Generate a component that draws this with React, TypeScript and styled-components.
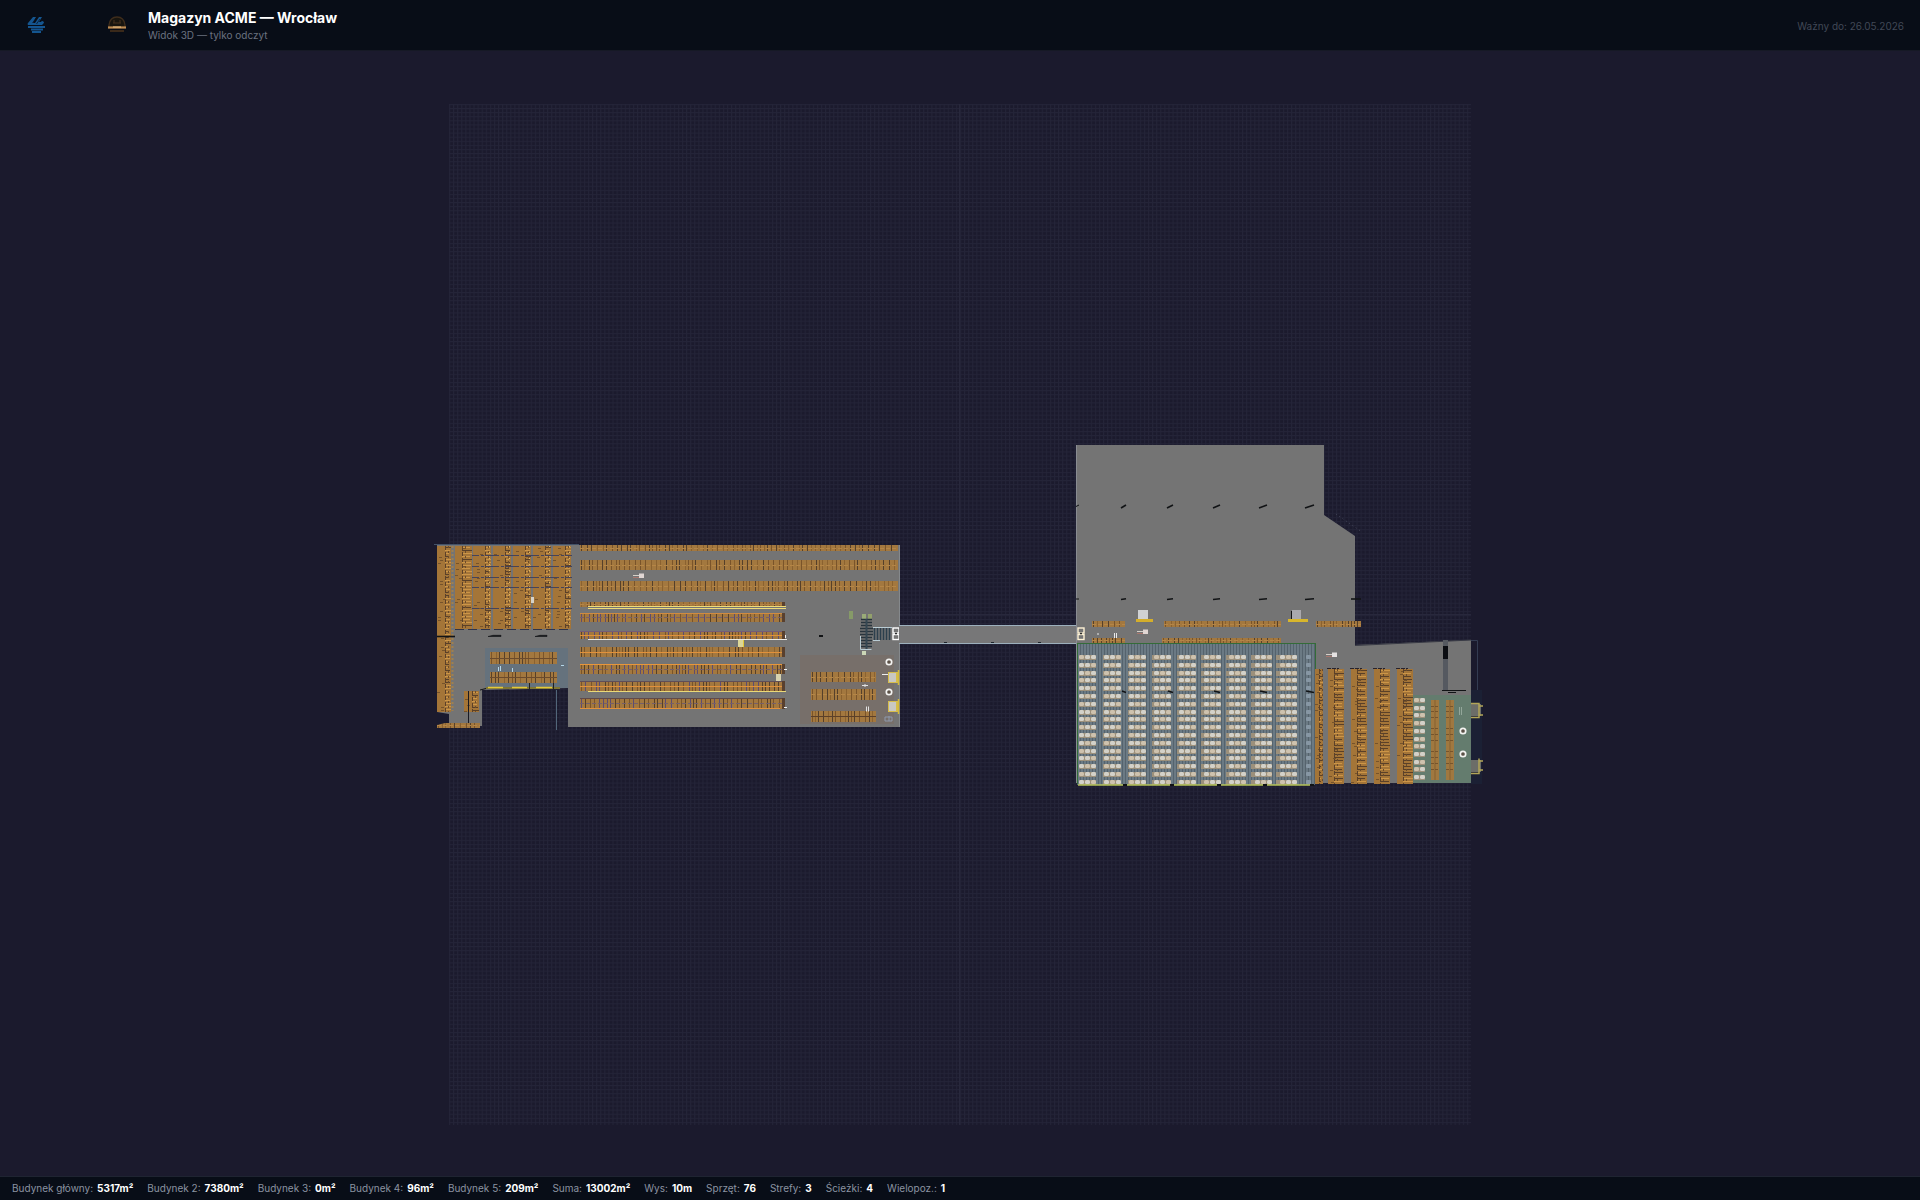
import React from "react";
import styled, { createGlobalStyle } from "styled-components";

const GlobalStyle = createGlobalStyle`
  *, *::before, *::after { box-sizing: border-box; }
  html, body, #root { height: 100%; }
  body {
    margin: 0;
    background: #1b1a2d;
    font-family: Inter, "Liberation Sans", sans-serif;
  }
`;

const Page = styled.div`
  display: flex;
  flex-direction: column;
  height: 100%;
  overflow: hidden;
`;

const Header = styled.header`
  display: flex;
  align-items: center;
  gap: 20px;
  flex: none;
  height: 51px;
  padding: 2px 16px 0;
  background: #080d17;
  border-bottom: 1px solid #161925;
`;

const Logos = styled.div`
  display: flex;
  align-items: center;
  gap: 60px;
  padding: 0 1px 0 11px;
`;

const LogoMark = styled.svg`
  display: block;
  width: 20px;
  height: 20px;
`;

const Heading = styled.div`
  flex: 1;
  min-width: 0;
`;

const Title = styled.h1`
  margin: 0;
  font-size: 14px;
  line-height: 18px;
  font-weight: 700;
  color: #ffffff;
`;

const Subtitle = styled.p`
  margin: 0;
  font-size: 10px;
  line-height: 16px;
  color: #6b7280;
`;

const Validity = styled.p`
  margin: 0;
  font-size: 10px;
  line-height: 16px;
  color: #414856;
`;

const Viewport = styled.main`
  flex: 1;
  min-height: 0;
`;

const Scene = styled.svg`
  display: block;
  width: 100%;
  height: 100%;
`;

const Footer = styled.footer`
  flex: none;
  height: 24px;
  padding: 0 12px 2px;
  background: #080d17;
  border-top: 1px solid #1f2432;
`;

const Stats = styled.dl`
  display: flex;
  align-items: center;
  gap: 14px;
  height: 100%;
  margin: 0;
  font-size: 10px;
  line-height: 16px;
`;

const Stat = styled.div`
  display: flex;
  gap: 4px;
  white-space: nowrap;
`;

const StatName = styled.dt`
  color: #8b93a1;
`;

const StatValue = styled.dd`
  margin: 0;
  font-weight: 700;
  color: #ffffff;
`;

const stats: [string, string][] = [
  ["Budynek główny:", "5317m²"],
  ["Budynek 2:", "7380m²"],
  ["Budynek 3:", "0m²"],
  ["Budynek 4:", "96m²"],
  ["Budynek 5:", "209m²"],
  ["Suma:", "13002m²"],
  ["Wys:", "10m"],
  ["Sprzęt:", "76"],
  ["Strefy:", "3"],
  ["Ścieżki:", "4"],
  ["Wielopoz.:", "1"],
];

const random = (seed: number) => {
  let s = seed * 7919 + 17;
  return () => {
    s = (s * 16807) % 2147483647;
    return s / 2147483647;
  };
};

type Box = { x: number; y: number; w: number; h: number };

/* Shelving that runs left to right, with uprights across it. */
const RowRack = ({ x, y, w, h, beam, blue, hub }: Box & { beam?: string; blue?: boolean; hub?: boolean }) => {
  const next = random(x + y * 3);
  const posts = [];
  for (let p = x + 1; p < x + w - 1; p += 3 + Math.floor(next() * 4)) {
    const r = next();
    posts.push(
      <rect key={p} x={p} y={y} width={1} height={h} fill={r < 0.35 ? "#56402a" : r < 0.7 ? "#7a542a" : blue ? "#5d4c70" : "#8b6230"} />
    );
  }
  return (
    <g>
      <rect x={x} y={y} width={w} height={h} fill="#a3783f" />
      {posts}
      <path d={`M${x} ${y + Math.floor(h / 2) + 0.5}h${w}`} stroke={blue ? "#755f6a" : "#b58546"} strokeWidth={1} strokeDasharray="4 2" />
      {beam && <path d={`M${x} ${y + 0.5}h${w}`} stroke={beam} />}
      {hub && <rect x={x + w - 3} y={y} width={3} height={h} fill="#59402e" />}
    </g>
  );
};

/* Shelving that runs top to bottom, seen with its levels and braces. */
const ColumnRack = ({ x, y, w, h, split = 0.55, dark }: Box & { split?: number; dark?: boolean }) => {
  const next = random(x * 5 + y);
  const marks = [];
  const edge = x + Math.round(w * split);
  for (let p = y + 1; p < y + h - 1; p += 3) {
    const len = x + w - edge - Math.floor(next() * 3);
    marks.push(<rect key={p} x={edge} y={p} width={Math.max(1, len)} height={1} fill={next() < (dark ? 0.55 : 0.3) ? "#5a4028" : "#cc9547"} />);
    if (next() < 0.35) {
      marks.push(<rect key={`l${p}`} x={x + Math.floor(next() * w * 0.5)} y={p + 1} width={3} height={1} fill="#76532b" />);
    }
  }
  return (
    <g>
      <rect x={x} y={y} width={w} height={h} fill="#a47538" />
      {marks}
      <path d={`M${edge + 0.5} ${y}v${h}`} stroke="#5b4029" strokeDasharray="4 2" />
      <path d={`M${edge + 3.5} ${y}v${h}`} stroke="#6b4b2b" strokeDasharray="2 3" />
    </g>
  );
};

const Shadow = ({ x, y, len, rise = 0 }: { x: number; y: number; len: number; rise?: number }) => (
  <path d={`M${x} ${y}L${x + len} ${y - rise}`} stroke="#111315" strokeWidth={1.6} />
);

const Truck = ({ x, y, tone = "#e0d6d3" }: { x: number; y: number; tone?: string }) => (
  <g>
    <path d={`M${x} ${y + 2.5}h6`} stroke="#d5cfc8" />
    <path d={`M${x} ${y + 4.5}h7`} stroke="#a8756c" />
    <rect x={x + 6} y={y + 0.5} width={5} height={4.5} fill={tone} />
  </g>
);

const Ring = ({ x, y }: { x: number; y: number }) => (
  <circle cx={x} cy={y} r={2.7} fill="#5a5046" stroke="#f3f3f1" strokeWidth={1.7} />
);

const Gate = ({ x, y, tone = "#ffffff" }: { x: number; y: number; tone?: string }) => (
  <g fill="none" stroke={tone} strokeWidth={1.4}>
    <rect x={x} y={y} width={6} height={5} />
    <rect x={x} y={y + 6.500} width={6} height={5} />
    <path d={`M${x + 2} ${y + 5.500}h2`} stroke="#2a2a2a" />
  </g>
);

const Pallet = ({ x, y, i, width = 17, tail = 0 }: { x: number; y: number; i: number; width?: number; tail?: number }) => (
  <g>
    <rect x={x - tail} y={y} width={width + tail} height={5} fill="#9c907b" />
    {Array.from({ length: Math.round(width / 6) }, (_, k) => (
      <rect key={k} x={x + k * 6} y={y} width={5} height={4} rx={1.500} fill={(i + k) % 3 ? "#d3d1c9" : "#cec2ae"} />
    ))}
  </g>
);

const GroundGrid = () => (
  <g>
    <defs>
      <pattern id="cells" x={449} y={104} width={4.0879} height={4.0879} patternUnits="userSpaceOnUse">
        <path d="M0 .5H4.09M.5 0V4.09" stroke="#242438" strokeWidth={1} />
      </pattern>
    </defs>
    <rect x={449} y={104} width={1022} height={1021} fill="url(#cells)" />
    <path d="M959.5 104v1021M449 614.5h1022" stroke="#28283c" />
  </g>
);

const LeftBuilding = () => (
  <g>
    <path d="M437 545H899.500V727H568V688L482 690V726H449V714H437Z" fill="#747474" />
    <path d="M899.500 545V727" stroke="#85898c" />
    <rect x={485} y={648} width={83} height={40} fill="#65727d" />
    <rect x={800} y={655} width={94} height={69} fill="#776f6a" />

    <ColumnRack x={437} y={546} w={14} h={166} split={0.6} />
    <path d="M452.500 546V711" stroke="#a0804f" strokeWidth={2} strokeDasharray="2 2" />
    <ColumnRack x={455} y={546} w={17} h={83} split={0.4} />
    {[473, 493, 513, 533, 553].map((x) => (
      <g key={x}>
        <ColumnRack x={x} y={546} w={18} h={83} split={0.65} />
        <path d={`M${x - 1} 555.500h21M${x - 1} 566.500h21M${x - 1} 577.500h21M${x - 1} 587.500h21M${x - 1} 608.500h21`} stroke="#45435a" strokeDasharray="7 2 3 1" />
        <path d={`M${x + 16.500} 546v83`} stroke="#dcb866" strokeDasharray="1 5" />
      </g>
    ))}
    <path d="M434 544.500H579" stroke="#435268" />
    <path d="M455 629.500H572" stroke="#303449" strokeDasharray="9 4" />
    <path d="M437 636.500H455" stroke="#111315" strokeWidth={1.600} />
    <path d="M488 636.500L493 635.300H501V636.500ZM535 636.500L540 635.300H547V636.500Z" fill="#111315" stroke="#111315" strokeWidth={0.600} />
    <ColumnRack x={464} y={691} w={15} h={21} />
    <path d="M468.500 691V728" stroke="#1a1a22" />
    <RowRack x={437} y={723} w={43} h={5} />
    <path d="M437 712L449 714V722L437 725Z" fill="#1a1a2e" />

    <RowRack x={490} y={652} w={67} h={12} />
    <RowRack x={490} y={672} w={67} h={11} />
    <path d="M490 658.500h67M490 677.500h67" stroke="#6b4a2c" />
    <path d="M498.500 667v4M500.500 666v5M512.500 668v4M561 665.500h3" stroke="#b4d6e8" />
    <path d="M486 688H560" stroke="#7f7634" strokeWidth={2} />
    <path d="M488 687.500h15M512 687.500h15M536 687.500h16" stroke="#e5c938" strokeWidth={1.6} />
    <path d="M529.500 683v6M553.500 683v6" stroke="#242018" />
    <path d="M556.500 690V730" stroke="#52667a" />
    <path d="M480 690L486 688.500" stroke="#111315" />

    <RowRack x={580} y={545} w={318} h={6} />
    <RowRack x={580} y={560} w={318} h={10} />
    <RowRack x={580} y={581} w={318} h={10} />
    <RowRack x={580} y={602} w={205} h={5} hub />
    <RowRack x={580} y={613} w={205} h={9} beam="#d18b3f" blue hub />
    <RowRack x={580} y={631} w={205} h={8} beam="#745b78" blue hub />
    <RowRack x={580} y={647} w={205} h={10} hub />
    <RowRack x={580} y={664} w={205} h={10} beam="#e8963b" blue hub />
    <RowRack x={580} y={681} w={205} h={10} beam="#5f4e59" blue hub />
    <RowRack x={580} y={698} w={205} h={11} beam="#624a49" blue hub />
    <path d="M580 635.500H782M580 652.500H782M580 686.500H782M580 708.500H780" stroke="#e2913b" />
    <path d="M588 606.500H786M588 608.500H786" stroke="#efdc78" />
    <path d="M588 639.500H787" stroke="#ece9e2" />
    <path d="M588 691.500H786" stroke="#ead978" />
    <path d="M784 669.500h3M784 707.500h3M785.500 635v3" stroke="#f2f2f2" />

    <Truck x={633} y={573} />
    <rect x={738} y={640} width={6} height={7} fill="#dcd698" />
    <path d="M743.500 640v7" stroke="#e5c938" />
    <rect x={776} y={674} width={5} height={7} fill="#d8d3b0" />
    <rect x={819} y={635} width={4} height={2} fill="#111315" />
    <rect x={531} y={597} width={3} height={6} fill="#d6d2c8" />

    <RowRack x={811} y={672} w={65} h={10} />
    <RowRack x={811} y={689} w={65} h={11} />
    <RowRack x={811} y={711} w={65} h={11} />
    <path d="M811 716.500h65" stroke="#5c4029" />
    <path d="M862 685.500h6M865 684v3M866.500 706.500v5M868.500 706.500v5" stroke="#e2e2e2" />
    <Ring x={889} y={662} />
    <Ring x={889} y={692} />
    {[672, 701].map((y) => (
      <g key={y}>
        <rect x={888} y={y} width={10} height={11} fill="#d6bd4c" />
        <rect x={889} y={y + 1} width={7} height={9} fill="#c9c8c2" />
        <path d={`M898.500 ${y - 2}v15`} stroke="#d4ba38" strokeWidth={1.500} />
      </g>
    ))}
    <path d="M882 674.500h6" stroke="#ededed" />
    <path d="M885 717h7v4h-7zM889 716v5" fill="none" stroke="#8e99ac" />

    <rect x={849} y={611} width={4} height={8} fill="#869a68" />
    <rect x={862} y={614} width={4} height={5} fill="#9aac78" />
    <rect x={868} y={614} width={4} height={5} fill="#93a16c" />
    <rect x={862} y={651} width={4} height={4} fill="#cbd6b6" />
    <path d="M861 619.500h11M861 622.500h11M861 625.500h11M860 628.500h13M860 631.500h13M860 634.500h13M861 637.500h11M861 640.500h11M861 643.500h11M861 646.500h11" stroke="#28343d" strokeWidth={1.600} />
    <path d="M866.500 619V649" stroke="#354752" strokeWidth={2} />
    <path d="M874.500 628v12M877.500 628v12M880.500 628v12M883.500 628v12M886.500 628v12M889.500 628v12" stroke="#2c3f4d" strokeWidth={1.600} />
    <path d="M873 627.500h19M873 640.500h7M860.500 636v13.500h11" fill="none" stroke="#b9ccd4" />
    <Gate x={893} y={628} />
  </g>
);

const Bridge = () => (
  <g>
    <rect x={899} y={625} width={179} height={18} fill="#777778" />
    <path d="M899 625.500H1077M899 643.500H1077" stroke="#9db0bd" />
    <path d="M944 642.500h3M991 642.500h3M1038 642.500h3" stroke="#1d2329" />
  </g>
);

const columnsX = [1079, 1104, 1129, 1154, 1179, 1204, 1229, 1255, 1280];
const palletRows = Array.from({ length: 17 }, (_, i) => Math.round(655 + i * 7.8));

const RightBuilding = () => (
  <g>
    <path d="M1076 445H1324V515L1355 536V645L1471 640V783H1076Z" fill="#747474" />
    <path d="M1076.500 445V783" stroke="#898c92" />
    <path d="M1355 645.500L1471 640" stroke="#383a45" />
    <path d="M1336 514L1362 532" stroke="#45475b" strokeDasharray="1 3" />
    <path d="M1076 506.500l3 -1.500M1076 599h3" stroke="#111315" />
    {[1121, 1167, 1213, 1259, 1305].map((x, i) => (
      <g key={x}>
        <Shadow x={x} y={508} len={5 + i} rise={3} />
        <Shadow x={x} y={599.500} len={5 + i} rise={0.700} />
      </g>
    ))}
    <Shadow x={1351} y={599} len={10} />

    <rect x={1138} y={610} width={10} height={9} fill="#d0d2d3" />
    <rect x={1136} y={619} width={17} height={3} fill="#d4ae2b" />
    <rect x={1292} y={610} width={9} height={9} fill="#aaa9ad" />
    <path d="M1291.500 611v8" stroke="#151515" />
    <rect x={1288} y={619} width={20} height={3} fill="#d8b62c" />

    <RowRack x={1092} y={621} w={33} h={6} />
    <RowRack x={1164} y={621} w={117} h={6} />
    <RowRack x={1316} y={621} w={45} h={6} />
    <RowRack x={1092} y={638} w={33} h={5} />
    <RowRack x={1162} y={638} w={119} h={5} />
    <path d="M1114.500 633v5M1116.500 633v5M1097 634h2" stroke="#e9e9e9" />
    <Truck x={1137} y={629} />
    <Truck x={1326} y={652} tone="#e4e1e1" />
    <Gate x={1078} y={628} tone="#fff3d6" />

    <rect x={1077} y={643} width={238} height={142} fill="url(#floorStripes)" />
    {columnsX.map((x, c) => palletRows.map((y, r) => <Pallet key={`${c}-${r}`} x={x} y={y} i={c + r} tail={Math.round(c / 2)} />))}
    {palletRows.map((y) => (
      <rect key={y} x={1306} y={y} width={5} height={4} rx={1} fill="#8797a4" />
    ))}
    {[1122, 1168, 1214, 1260, 1306].map((x, i) => (
      <Shadow key={x} x={x} y={691} len={4 + i} rise={-1.500} />
    ))}
    <path d="M1077.500 643V784M1315.500 643V784M1077 643.500H1315" stroke="#336c38" fill="none" />
    <path d="M1078 785H1313" stroke="#b6c55a" strokeWidth={1.500} />
    <path d="M1123 785h4M1170 785h4M1217 785h4M1263 785h4M1310 785h4" stroke="#111315" strokeWidth={2} />

    <rect x={1413} y={695} width={58} height={88} fill="#647c6e" />
    <ColumnRack x={1315} y={669} w={8} h={115} dark />
    {[1328, 1351, 1374, 1397].map((x) => (
      <g key={x}>
        <ColumnRack x={x} y={669} w={16} h={115} split={0.35} dark />
        <path d={`M${x - 1} 668.500h12`} stroke="#28222a" strokeDasharray="4 1" />
      </g>
    ))}
    {Array.from({ length: 11 }, (_, i) => (
      <Pallet key={i} x={1414} y={Math.round(698 + i * 7.700)} i={i} width={11} />
    ))}
    {[1431, 1446].map((x) => (
      <g key={x}>
        <rect x={x} y={700} width={8} height={80} fill="#a07840" />
        <path d={`M${x + 4} 700v80`} stroke="#86602f" />
        <path d={`M${x} 706.500h8M${x} 711.500h8M${x} 717.500h8M${x} 728.500h8M${x} 734.500h8M${x} 740.500h8M${x} 751.500h8M${x} 757.500h8M${x} 763.500h8M${x} 769.500h8`} stroke="#76542c" strokeDasharray="3 1" />
      </g>
    ))}
    <path d="M1459.500 707v8M1461.500 707v8" stroke="#93a69a" />
    <Ring x={1463} y={731} />
    <Ring x={1463} y={754} />
    <rect x={1443} y={640} width={5} height={50} fill="#555960" />
    <rect x={1443} y={646} width={5} height={13} fill="#0b0d12" />
    <path d="M1442 690.500H1466M1448 692.500h8" stroke="#111315" />
    <path d="M1471 640.500H1477.500V690" fill="none" stroke="#343c52" />
    <rect x={1471} y={690} width={11} height={94} fill="#1b2034" />
    <rect x={1471} y={704} width={10} height={12} fill="#6c6d68" />
    <rect x={1471} y={760} width={10} height={12} fill="#6c6d68" />
    <path d="M1471 703.500h8v14h-8M1479 706h4M1479 715h4M1471 773.500h8v-15M1479 761h4M1479 770h4" fill="none" stroke="#b2a557" strokeWidth={1.500} />
  </g>
);

const App = () => (
  <Page>
    <GlobalStyle />
    <Header>
      <Logos>
        <LogoMark viewBox="0 0 20 20" role="img" aria-label="Logo">
          <path d="M6 1H9L6 7H8L12 1H15L12 6H14A1.500 1.500 0 1 1 16 8L15 9H1Q0 8 1 7Z" fill="#14558f" />
          <path d="M1 11H18M4 13.500H16" stroke="#14558f" strokeWidth={1.800} />
          <path d="M5 16H14" stroke="#14558f" strokeWidth={2} />
          <path d="M5.500 7L9 2M9.500 8L13 3" stroke="#080d17" strokeWidth={0.700} />
        </LogoMark>
        <LogoMark viewBox="0 0 20 20" role="img" aria-label="Logo partnera">
          <path d="M2 12V9Q3 1 10 1T18 9V12" fill="#18150f" stroke="#3f2d1c" strokeWidth={1.300} />
          <path d="M6 7H14M7 4v3M13 4v3" stroke="#46331e" strokeWidth={1} />
          <path d="M1 11.500H19" stroke="#c08d52" strokeWidth={2.200} />
          <path d="M6 11H14" stroke="#e6bf85" strokeWidth={1} />
          <path d="M3 15H17" stroke="#4b331d" strokeWidth={1.500} />
        </LogoMark>
      </Logos>
      <Heading>
        <Title>Magazyn ACME — Wrocław</Title>
        <Subtitle>Widok 3D — tylko odczyt</Subtitle>
      </Heading>
      <Validity>Ważny do: 26.05.2026</Validity>
    </Header>
    <Viewport>
      <Scene viewBox="0 51 1920 1125" role="img" aria-label="Widok magazynu z góry">
        <defs>
          <pattern id="floorStripes" x={1077} y={643} width={3} height={142} patternUnits="userSpaceOnUse">
            <rect width={3} height={142} fill="#6b7a84" />
            <rect width={1} height={142} fill="#55636d" />
          </pattern>
        </defs>
        <GroundGrid />
        <LeftBuilding />
        <Bridge />
        <RightBuilding />
      </Scene>
    </Viewport>
    <Footer>
      <Stats>
        {stats.map(([name, value]) => (
          <Stat key={name}>
            <StatName>{name}</StatName>
            <StatValue>{value}</StatValue>
          </Stat>
        ))}
      </Stats>
    </Footer>
  </Page>
);

export default App;
